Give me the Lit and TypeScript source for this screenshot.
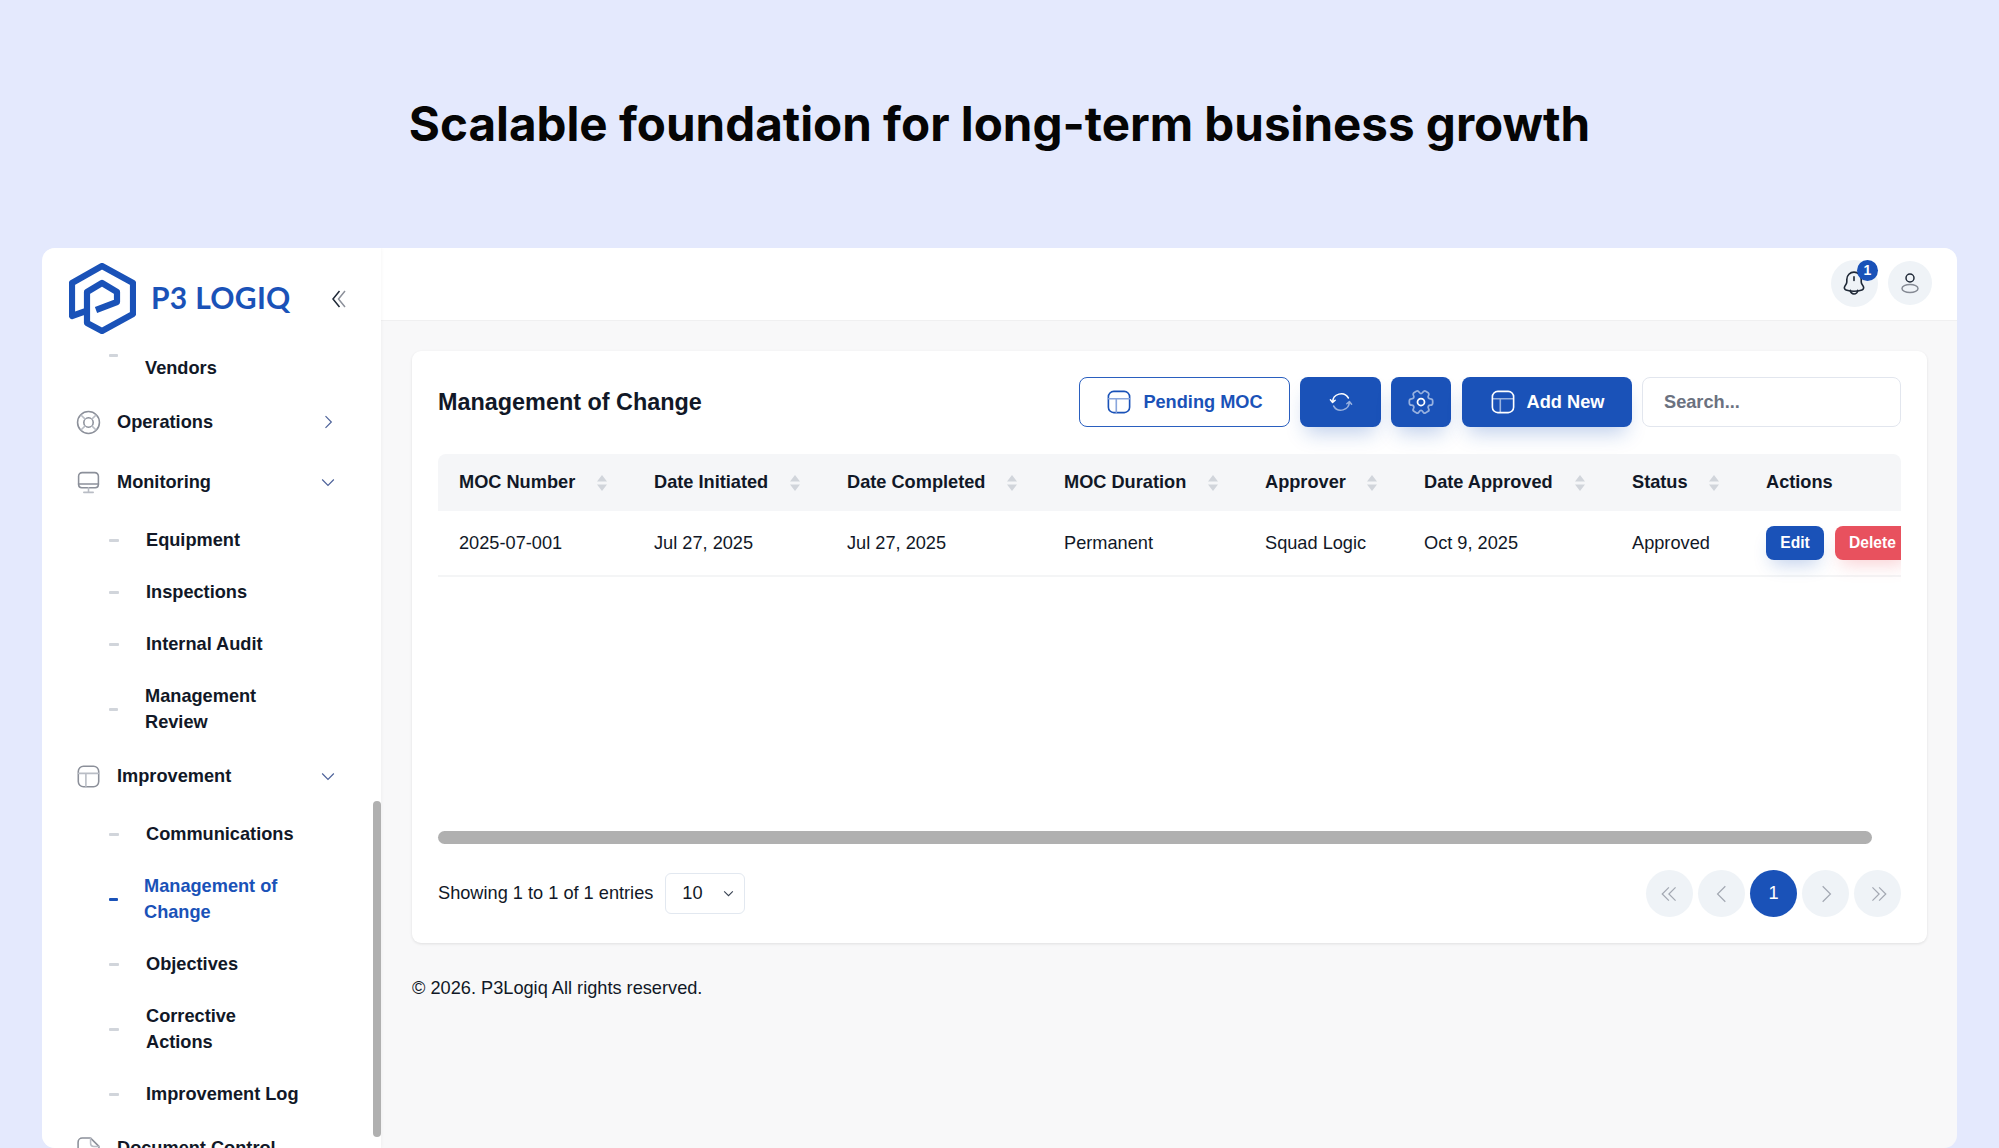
import { LitElement, html, css, svg } from "lit";
import { customElement } from "lit/decorators.js";

const chevronRight = svg`<path d="M9 5l7 7-7 7"/>`;
const chevronDown = svg`<path d="M5 9l7 7 7-7"/>`;

const ic = (body: unknown, cls = "") =>
  html`<svg class="ic ${cls}" viewBox="0 0 24 24" fill="none">${body}</svg>`;

// two tone table glyph used in the nav and on the buttons
const tableIcon = svg`
  <rect class="a" x="2.2" y="2.2" width="19.6" height="19.6" rx="5"/>
  <path class="b" d="M2.5 9h19M9.5 9v12.5"/>`;
const monitorIcon = svg`
  <path class="a" d="M6 2.5h12a3.5 3.5 0 013.5 3.5v8a3 3 0 01-3 3h-13a3 3 0 01-3-3V6A3.5 3.5 0 016 2.5z"/>
  <path class="a" d="M2.5 13.5h19"/>
  <path class="b" d="M12 17v4.5M7.5 21.5h9"/>`;
const buoyIcon = svg`
  <circle class="a" cx="12" cy="12" r="10.5"/>
  <circle class="a" cx="12" cy="12" r="4.5"/>
  <path class="b" d="M5 5l3.8 3.8M19 5l-3.8 3.8M5 19l3.8-3.8M19 19l-3.8-3.8"/>`;
const docIcon = svg`
  <path class="a" d="M6 2h8l8 8v8a4 4 0 01-4 4H6a4 4 0 01-4-4V6a4 4 0 014-4z"/>
  <path class="b" d="M14 2v5a3 3 0 003 3h5"/>`;
const gearIcon = svg`
  <path class="b" d="M2 12.88v-1.76c0-1.04.85-1.9 1.9-1.9 1.81 0 2.55-1.28 1.64-2.85-.52-.9-.21-2.07.7-2.59l1.73-.99c.79-.47 1.81-.19 2.28.6l.11.19c.9 1.57 2.38 1.57 3.29 0l.11-.19c.47-.79 1.49-1.07 2.28-.6l1.73.99c.91.52 1.22 1.69.7 2.59-.91 1.57-.17 2.85 1.64 2.85 1.04 0 1.9.85 1.9 1.9v1.76c0 1.04-.85 1.9-1.9 1.9-1.81 0-2.55 1.28-1.64 2.85.52.91.21 2.07-.7 2.59l-1.73.99c-.79.47-1.81.19-2.28-.6l-.11-.19c-.9-1.57-2.38-1.57-3.29 0l-.11.19c-.47.79-1.49 1.07-2.28.6l-1.73-.99a1.9 1.9 0 01-.7-2.59c.91-1.57.17-2.85-1.64-2.85-1.05 0-1.9-.86-1.9-1.9z"/>
  <circle class="a" cx="12" cy="12" r="3"/>`;
const refreshIcon = svg`
  <path class="a" d="M3.6 12.2A8.5 8.5 0 0119.4 8M1.4 9.8l2.2 2.6 2.6-2.2"/>
  <path class="b" d="M20.4 11.8A8.5 8.5 0 014.6 16M22.6 14.2l-2.2-2.6-2.6 2.2"/>`;
const bellIcon = svg`
  <path class="a" d="M12 6.4v3.3"/>
  <path class="a" d="M12.02 2c-3.68 0-6.66 2.98-6.66 6.66v2.1c0 .68-.28 1.7-.63 2.28l-1.27 2.12c-.78 1.31-.24 2.77 1.2 3.25 4.78 1.59 9.94 1.59 14.72 0 1.35-.45 1.93-2.03 1.2-3.25l-1.27-2.12c-.35-.58-.63-1.61-.63-2.28v-2.1C18.68 5 15.68 2 12.02 2z"/>
  <path class="a" d="M15.33 18.82c0 1.83-1.5 3.33-3.33 3.33-.91 0-1.75-.38-2.35-.98-.6-.6-.98-1.44-.98-2.35"/>`;
const userIcon = svg`
  <circle class="a" cx="12" cy="7" r="4"/>
  <ellipse class="b" cx="12" cy="17.5" rx="8" ry="4"/>`;

type Nav =
  | { kind: "top"; label: string; icon: unknown; open?: boolean }
  | { kind: "sub"; label: string; active?: boolean; tight?: boolean };

const nav: Nav[] = [
  { kind: "sub", label: "Approved\nVendors", tight: true },
  { kind: "top", label: "Operations", icon: buoyIcon },
  { kind: "top", label: "Monitoring", icon: monitorIcon, open: true },
  { kind: "sub", label: "Equipment" },
  { kind: "sub", label: "Inspections" },
  { kind: "sub", label: "Internal Audit" },
  { kind: "sub", label: "Management\nReview", tight: true },
  { kind: "top", label: "Improvement", icon: tableIcon, open: true },
  { kind: "sub", label: "Communications" },
  { kind: "sub", label: "Management of\nChange", active: true, tight: true },
  { kind: "sub", label: "Objectives" },
  { kind: "sub", label: "Corrective\nActions" },
  { kind: "sub", label: "Improvement Log" },
  { kind: "top", label: "Document Control", icon: docIcon },
];

const columns = [
  { label: "MOC Number", width: 195, value: "2025-07-001" },
  { label: "Date Initiated", width: 193, value: "Jul 27, 2025" },
  { label: "Date Completed", width: 217, value: "Jul 27, 2025" },
  { label: "MOC Duration", width: 201, value: "Permanent" },
  { label: "Approver", width: 159, value: "Squad Logic" },
  { label: "Date Approved", width: 208, value: "Oct 9, 2025" },
  { label: "Status", width: 134, value: "Approved" },
];

@customElement("app-root")
export class AppRoot extends LitElement {
  static styles = css`
    :host {
      display: block;
      height: 1148px;
      overflow: hidden;
      background: #e4e9fd;
      font-family: "Liberation Sans", Arial, sans-serif;
      color: #111827;
      font-size: 18.2px;
    }
    h1 {
      margin: 0;
      height: 248px;
      padding-top: 94px;
      box-sizing: border-box;
      text-align: center;
      font-family: Inter, sans-serif;
      font-size: 47.55px;
      line-height: 60px;
      font-weight: 650;
      color: #050505;
    }
    .window {
      display: flex;
      height: 900px;
      margin: 0 42px;
      border-radius: 13px;
      overflow: hidden;
      background: #f8f8f9;
    }
    .ic {
      display: block;
      width: 24px;
      height: 24px;
      flex: none;
    }
    .ic path,
    .ic rect,
    .ic circle,
    .ic ellipse {
      stroke-width: 1.5;
      stroke-linecap: round;
      stroke-linejoin: round;
    }

    /* sidebar */
    .sidebar {
      position: relative;
      width: 339px;
      flex: none;
      display: flex;
      flex-direction: column;
      background: #fff;
      box-shadow: 1px 0 3px rgba(0, 0, 0, 0.03);
      z-index: 1;
    }
    .brand {
      height: 105px;
      flex: none;
      display: flex;
      align-items: center;
      padding-left: 27px;
      box-sizing: border-box;
    }
    .logo {
      width: 67px;
      height: 71px;
      margin-top: -4px;
      flex: none;
      fill: none;
      stroke: #1a52b8;
      stroke-width: 6.2;
      stroke-linejoin: round;
    }
    .brand-name {
      margin: -7px 0 0 15px;
      font-family: Lato, sans-serif;
      font-size: 30px;
      font-weight: 700;
      color: #1a52b8;
      letter-spacing: 0.3px;
      white-space: nowrap;
      width: 181px;
    }
    .collapse {
      width: 14px;
      height: 18px;
      margin-top: -4px;
      flex: none;
      fill: none;
      stroke-width: 1.5;
    }
    .nav {
      flex: 1;
      overflow: hidden;
    }
    .nav-list {
      margin-top: -39px;
    }
    .top {
      height: 60px;
      display: flex;
      align-items: center;
      padding-left: 34px;
      font-weight: 700;
    }
    .top .ic {
      width: 25px;
      height: 25px;
    }
    .top .ic .a {
      stroke: #8c909a;
    }
    .top .ic .b {
      stroke: #b9bdc5;
    }
    .top span {
      margin-left: 16px;
      flex: 1;
    }
    .chev {
      width: 20px;
      height: 20px;
      margin-right: 43px;
      flex: none;
      fill: none;
      stroke: #4c6199;
      stroke-width: 1.4;
    }
    .sub {
      display: flex;
      align-items: center;
      box-sizing: border-box;
      min-height: 52px;
      padding: 4px 0 0 67px;
      font-weight: 700;
    }
    .dash {
      width: 10px;
      height: 3px;
      border-radius: 1px;
      background: #d1d5db;
      margin-right: 27px;
      flex: none;
    }
    .sub.tight .dash {
      width: 9px;
    }
    .sub .label {
      white-space: pre-line;
      line-height: 26px;
      padding: 11px 0;
    }
    .sub.active {
      color: #1a52b8;
    }
    .sub.active .dash {
      background: #1a52b8;
    }
    .sub.active .label {
      margin-left: -1px;
    }
    .side-thumb {
      position: absolute;
      right: 0;
      top: 553px;
      width: 8px;
      height: 336px;
      border-radius: 4px;
      background: #b0b0b0;
    }

    /* main */
    .main {
      flex: 1;
      min-width: 0;
      display: flex;
      flex-direction: column;
    }
    .topbar {
      height: 73px;
      flex: none;
      box-sizing: border-box;
      display: flex;
      align-items: center;
      justify-content: flex-end;
      gap: 10px;
      padding: 0 25px 2px 0;
      background: #fff;
      border-bottom: 1px solid #f0f0f1;
    }
    .round {
      position: relative;
      border-radius: 50%;
      background: #eff3f7;
      display: flex;
      align-items: center;
      justify-content: center;
    }
    .bell {
      width: 47px;
      height: 47px;
    }
    .bell .a {
      stroke: #1f2937;
    }
    .bell .ic {
      width: 26px;
      height: 26px;
      margin-right: 2px;
    }
    .profile {
      width: 44px;
      height: 44px;
    }
    .profile .a {
      stroke: #1f2937;
    }
    .profile .b {
      stroke: #858a94;
    }
    .badge {
      position: absolute;
      top: 0;
      right: 0;
      width: 21px;
      height: 21px;
      border-radius: 50%;
      background: #1a52b8;
      color: #fff;
      font-size: 14px;
      font-weight: 700;
      line-height: 21px;
      text-align: center;
    }
    .content {
      padding: 30px 30px 0 31px;
    }
    .card {
      background: #fff;
      border-radius: 9px;
      padding: 26px;
      box-shadow: 0 1px 3px rgba(0, 0, 0, 0.1);
    }
    .card-head {
      display: flex;
      align-items: center;
      gap: 10px;
    }
    .card-head h2 {
      margin: 0 auto 0 0;
      font-size: 23.4px;
      font-weight: 700;
    }
    .btn {
      height: 50px;
      box-sizing: border-box;
      display: flex;
      align-items: center;
      justify-content: center;
      gap: 11px;
      border: none;
      border-radius: 8px;
      background: #1a52b8;
      color: #fff;
      font: 700 18.2px "Liberation Sans", Arial, sans-serif;
      box-shadow: 0 12px 20px -6px rgba(26, 82, 184, 0.28);
    }
    .btn .ic {
      width: 26px;
      height: 26px;
    }
    .btn .a {
      stroke: #fff;
    }
    .btn .b {
      stroke: rgba(255, 255, 255, 0.55);
    }
    .btn.outline {
      width: 211px;
      background: #fff;
      color: #1a52b8;
      border: 1.5px solid #2a5fbf;
      box-shadow: none;
    }
    .btn.outline .a {
      stroke: #1a52b8;
    }
    .btn.outline .b {
      stroke: #8aa6dc;
    }
    .btn.refresh {
      width: 81px;
    }
    .btn.refresh .ic {
      width: 24px;
      height: 24px;
    }
    .btn.gear {
      width: 60px;
      margin-right: 1px;
    }
    .btn.gear .ic {
      width: 28px;
      height: 28px;
    }
    .btn.add {
      width: 170px;
    }
    .search {
      width: 259px;
      height: 50px;
      box-sizing: border-box;
      border: 1.5px solid #e2e6ee;
      border-radius: 8px;
      padding: 0 21px;
      font: 700 18.2px "Liberation Sans", Arial, sans-serif;
      outline: none;
    }
    .search::placeholder {
      color: #6b7280;
      opacity: 1;
    }
    .table-wrap {
      height: 377px;
      margin-top: 27px;
      overflow: hidden;
    }
    table {
      border-collapse: collapse;
      table-layout: fixed;
      width: 1463px;
    }
    th {
      height: 57px;
      padding: 0 0 0 21px;
      background: #f5f6f8;
      text-align: left;
      font-weight: 700;
    }
    th:first-child {
      border-top-left-radius: 8px;
    }
    th:last-child {
      border-top-right-radius: 8px;
    }
    .th-in {
      display: flex;
      align-items: center;
      justify-content: space-between;
      padding-right: 25px;
    }
    .sort {
      width: 12px;
      height: 16px;
      flex: none;
      fill: #d1d5db;
    }
    td {
      height: 64px;
      padding: 0 0 0 21px;
      border-bottom: 2px solid #f4f5f6;
      white-space: nowrap;
    }
    .actions {
      display: flex;
      gap: 11px;
    }
    .small {
      height: 34px;
      width: 58px;
      flex: none;
      box-sizing: border-box;
      border: none;
      border-radius: 8px;
      color: #fff;
      background: #1a52b8;
      font: 700 15.6px "Liberation Sans", Arial, sans-serif;
      box-shadow: 0 10px 18px -6px rgba(26, 82, 184, 0.28);
    }
    .small.danger {
      width: 76px;
      padding: 0 0 0 14px;
      text-align: left;
      background: #e8515e;
      box-shadow: 0 10px 18px -6px rgba(232, 81, 94, 0.28);
    }
    .hbar {
      height: 13px;
      width: 1434px;
      border-radius: 7px;
      background: #b0b0b0;
    }
    .card-foot {
      display: flex;
      align-items: center;
      margin-top: 26px;
    }
    .select {
      width: 80px;
      height: 41px;
      box-sizing: border-box;
      margin-left: 12px;
      padding: 0 9px 0 16px;
      display: flex;
      align-items: center;
      justify-content: space-between;
      border: 1.5px solid #e2e8f0;
      border-radius: 6px;
    }
    .select svg {
      width: 13px;
      height: 13px;
      fill: none;
      stroke: #374151;
      stroke-width: 2;
    }
    .pager {
      margin-left: auto;
      display: flex;
      gap: 5px;
    }
    .page {
      width: 47px;
      height: 47px;
    }
    .page svg {
      width: 20px;
      height: 20px;
      fill: none;
      stroke: #a3a8b2;
      stroke-width: 1.1;
    }
    .page.on {
      background: #1a52b8;
      color: #fff;
    }
    .copy {
      margin-top: 33px;
      line-height: 24px;
    }
  `;

  renderNav(item: Nav) {
    if (item.kind === "top") {
      return html`<div class="top">
        ${ic(item.icon)}
        <span>${item.label}</span>
        ${item.label === "Document Control"
          ? ""
          : html`<svg class="chev" viewBox="0 0 24 24">
              ${item.open ? chevronDown : chevronRight}
            </svg>`}
      </div>`;
    }
    return html`<div class="sub ${item.tight ? "tight" : ""} ${item.active ? "active" : ""}">
      <i class="dash"></i>
      <div class="label">${item.label}</div>
    </div>`;
  }

  render() {
    return html`
      <h1>Scalable foundation for long-term business growth</h1>
      <div class="window">
        <aside class="sidebar">
          <div class="brand">
            <svg class="logo" viewBox="0 0 67 71">
              <path
                d="M17 48L3 53V20L33 3L64 20V51L33 68L18 60V29L33 20L48 29V39L27 47"
              />
            </svg>
            <div class="brand-name">P3 LOGIQ</div>
            <svg class="collapse" viewBox="0 0 14 18">
              <path d="M7.5 1L1 9l6.5 8" stroke="#1f2937" />
              <path d="M13 1L6.5 9l6.5 8" stroke="#8c909a" />
            </svg>
          </div>
          <div class="nav">
            <div class="nav-list">${nav.map((n) => this.renderNav(n))}</div>
          </div>
          <div class="side-thumb"></div>
        </aside>

        <div class="main">
          <div class="topbar">
            <div class="round bell">
              ${ic(bellIcon)}
              <div class="badge">1</div>
            </div>
            <div class="round profile">${ic(userIcon)}</div>
          </div>
          <div class="content">
            <div class="card">
              <div class="card-head">
                <h2>Management of Change</h2>
                <button class="btn outline">${ic(tableIcon)} Pending MOC</button>
                <button class="btn refresh">${ic(refreshIcon)}</button>
                <button class="btn gear">${ic(gearIcon)}</button>
                <button class="btn add">${ic(tableIcon)} Add New</button>
                <input class="search" placeholder="Search..." />
              </div>
              <div class="table-wrap">
                <table>
                  <colgroup>
                    ${columns.map((c) => html`<col style="width:${c.width}px" />`)}
                    <col style="width:156px" />
                  </colgroup>
                  <thead>
                    <tr>
                      ${columns.map(
                        (c) => html`<th>
                          <div class="th-in">
                            ${c.label}
                            <svg class="sort" viewBox="0 0 12 16">
                              <path d="M6 0l5 6.5H1zM6 16l5-6.5H1z" />
                            </svg>
                          </div>
                        </th>`
                      )}
                      <th>Actions</th>
                    </tr>
                  </thead>
                  <tbody>
                    <tr>
                      ${columns.map((c) => html`<td>${c.value}</td>`)}
                      <td>
                        <div class="actions">
                          <button class="small">Edit</button>
                          <button class="small danger">Delete</button>
                        </div>
                      </td>
                    </tr>
                  </tbody>
                </table>
              </div>
              <div class="hbar"></div>
              <div class="card-foot">
                <span>Showing 1 to 1 of 1 entries</span>
                <div class="select">
                  10
                  <svg viewBox="0 0 24 24"><path d="M4 8l8 8 8-8" /></svg>
                </div>
                <div class="pager">
                  <div class="round page">
                    <svg viewBox="0 0 18 18"><path d="M8 3L2 9l6 6M14 3L8 9l6 6" /></svg>
                  </div>
                  <div class="round page">
                    <svg viewBox="0 0 18 18"><path d="M12 2L5 9l7 7" /></svg>
                  </div>
                  <div class="round page on">1</div>
                  <div class="round page">
                    <svg viewBox="0 0 18 18"><path d="M6 2l7 7-7 7" /></svg>
                  </div>
                  <div class="round page">
                    <svg viewBox="0 0 18 18"><path d="M4 3l6 6-6 6M10 3l6 6-6 6" /></svg>
                  </div>
                </div>
              </div>
            </div>
            <div class="copy">© 2026. P3Logiq All rights reserved.</div>
          </div>
        </div>
      </div>
    `;
  }
}
